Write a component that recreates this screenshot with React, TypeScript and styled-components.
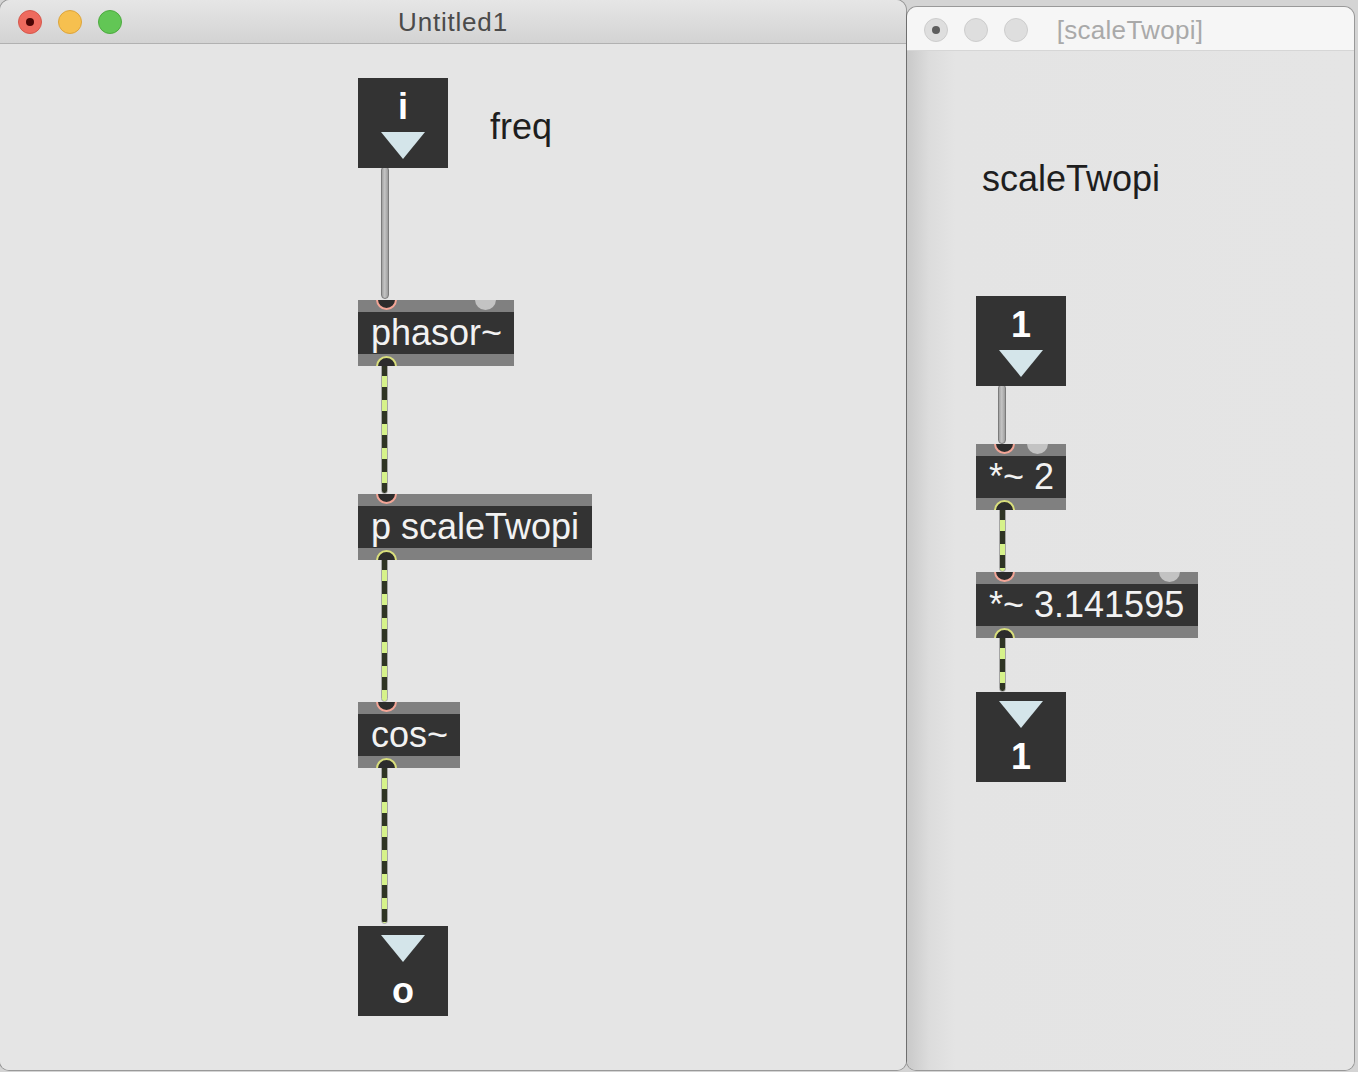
import React from "react";
import styled, { createGlobalStyle, css } from "styled-components";

const GlobalStyle = createGlobalStyle`
  html, body { margin: 0; padding: 0; }
  body {
    background: #d4d4d4;
    font-family: "Liberation Sans", Arial, sans-serif;
    overflow: hidden;
  }
`;

const Desktop = styled.div`
  display: flex;
  align-items: flex-start;
  width: 1358px;
  height: 1072px;
`;

const Window = styled.div<{ $w: number; $h: number; $top: number; $ml: number }>`
  width: ${(p) => p.$w}px;
  height: ${(p) => p.$h}px;
  margin-top: ${(p) => p.$top}px;
  margin-left: ${(p) => p.$ml}px;
  flex: none;
  display: flex;
  flex-direction: column;
  border-radius: 10px 10px 9px 9px;
  overflow: hidden;
  background: #e5e5e5;
  box-shadow: 0 0 0 1px rgba(0, 0, 0, 0.28);
`;

const TitleBar = styled.div<{ $active: boolean }>`
  height: 44px;
  flex: none;
  box-sizing: border-box;
  display: grid;
  grid-template-columns: 1fr auto 1fr;
  align-items: center;
  padding: 0 18px 0 ${(p) => (p.$active ? 18 : 17)}px;
  ${(p) =>
    p.$active
      ? css`
          background: linear-gradient(to bottom, #e6e6e6, #d3d3d3);
          border-bottom: 1px solid #b1b1b1;
        `
      : css`
          background: #f6f6f6;
          border-bottom: 1px solid #d6d6d6;
        `}
`;

const Lights = styled.div<{ $offset: number }>`
  display: flex;
  gap: 16px;
  margin-top: ${(p) => p.$offset}px;
`;

const Light = styled.span<{ $fill: string; $edge: string }>`
  width: 24px;
  height: 24px;
  box-sizing: border-box;
  border-radius: 50%;
  background: ${(p) => p.$fill};
  border: 1px solid ${(p) => p.$edge};
  display: flex;
  align-items: center;
  justify-content: center;
`;

const LightDot = styled.span<{ $color: string }>`
  width: 8px;
  height: 8px;
  border-radius: 50%;
  background: ${(p) => p.$color};
`;

const Title = styled.div<{ $active: boolean; $offset: number }>`
  font-size: 26px;
  letter-spacing: ${(p) => (p.$active ? 0.8 : 0.3)}px;
  color: ${(p) => (p.$active ? "#4b4b4b" : "#a9a9a9")};
  margin-top: ${(p) => p.$offset}px;
  white-space: nowrap;
`;

const Canvas = styled.div<{ $shade: boolean }>`
  position: relative;
  flex: 1;
  background: ${(p) =>
    p.$shade
      ? "linear-gradient(to right, #c9c9c9 0px, #dcdcdc 22px, #e4e4e4 48px, #e5e5e5 100%)"
      : "#e5e5e5"};
`;

const Node = styled.div<{ $x: number; $y: number }>`
  position: absolute;
  left: ${(p) => p.$x}px;
  top: ${(p) => p.$y}px;
`;

const ObjectBox = styled(Node)<{ $w: number }>`
  width: ${(p) => p.$w}px;
  height: 66px;
  box-sizing: border-box;
  overflow: hidden;
  background: linear-gradient(
    to bottom,
    #808080 0 12px,
    #333333 12px 54px,
    #808080 54px 66px
  );
  padding: 12px 0 0 13px;
  color: #f2f2f2;
  font-size: 36px;
  line-height: 42px;
  white-space: nowrap;
  z-index: 2;
`;

const Port = styled.span<{ $kind: "inlet" | "cold" | "outlet" }>`
  position: absolute;
  width: 21px;
  height: 21px;
  box-sizing: border-box;
  border-radius: 50%;
  ${(p) =>
    p.$kind === "inlet"
      ? css`
          left: 18px;
          top: -11px;
          background: #2c2c2c;
          border: 2.5px solid #f3a596;
        `
      : p.$kind === "cold"
      ? css`
          right: 18px;
          top: -11px;
          background: #c3c3c3;
        `
      : css`
          left: 18px;
          bottom: -11px;
          background: #2c2c2c;
          border: 2.5px solid #d9df7c;
        `}
`;

const NumberBox = styled(Node)<{ $out: boolean }>`
  width: 90px;
  height: 90px;
  box-sizing: border-box;
  background: #333333;
  display: flex;
  flex-direction: ${(p) => (p.$out ? "column-reverse" : "column")};
  justify-content: flex-end;
  align-items: center;
  gap: ${(p) => (p.$out ? 11 : 7)}px;
  padding: ${(p) => (p.$out ? "9px 0 7px" : "11px 0 9px")};
  z-index: 2;
`;

const NumberValue = styled.span`
  color: #ffffff;
  font-weight: bold;
  font-size: 36px;
  line-height: 36px;
`;

const Arrow = styled.span`
  width: 0;
  height: 0;
  border-left: 22px solid transparent;
  border-right: 22px solid transparent;
  border-top: 27px solid #d4e5ea;
`;

const Comment = styled(Node)`
  font-size: 36px;
  line-height: 42px;
  color: #1e1e1e;
  white-space: nowrap;
`;

const Cord = styled(Node)<{ $len: number; $signal: boolean }>`
  height: ${(p) => p.$len}px;
  box-sizing: border-box;
  border-radius: 4px;
  z-index: 1;
  ${(p) =>
    p.$signal
      ? css`
          width: 7px;
          border: 1px solid #a4a4a4;
          background: repeating-linear-gradient(
            to bottom,
            #2f3524 0 13px,
            #d6f28a 13px 24px
          );
        `
      : css`
          width: 8px;
          border: 1px solid #7b7b7b;
          background: linear-gradient(to right, #a2a2a2, #c4c4c4 45%, #9d9d9d);
        `}
`;

type Obj = { x: number; y: number; w: number; text: string; cold?: boolean };
type Num = { x: number; y: number; value: string; out?: boolean };
type Wire = { x: number; y: number; len: number; signal: boolean };
type Note = { x: number; y: number; text: string };

type Patch = {
  objects: Obj[];
  numbers: Num[];
  wires: Wire[];
  notes: Note[];
};

const mainPatch: Patch = {
  numbers: [
    { x: 358, y: 34, value: "i" },
    { x: 358, y: 882, value: "o", out: true },
  ],
  notes: [{ x: 490, y: 62, text: "freq" }],
  objects: [
    { x: 358, y: 256, w: 156, text: "phasor~", cold: true },
    { x: 358, y: 450, w: 234, text: "p scaleTwopi" },
    { x: 358, y: 658, w: 102, text: "cos~" },
  ],
  wires: [
    { x: 381, y: 122, len: 133, signal: false },
    { x: 381, y: 318, len: 132, signal: true },
    { x: 381, y: 512, len: 146, signal: true },
    { x: 381, y: 720, len: 160, signal: true },
  ],
};

const subPatch: Patch = {
  numbers: [
    { x: 69, y: 245, value: "1" },
    { x: 69, y: 641, value: "1", out: true },
  ],
  notes: [{ x: 75, y: 107, text: "scaleTwopi" }],
  objects: [
    { x: 69, y: 393, w: 90, text: "*~ 2", cold: true },
    { x: 69, y: 521, w: 222, text: "*~ 3.141595", cold: true },
  ],
  wires: [
    { x: 91, y: 333, len: 60, signal: false },
    { x: 92, y: 455, len: 66, signal: true },
    { x: 92, y: 583, len: 58, signal: true },
  ],
};

const PatchView: React.FC<{ patch: Patch }> = ({ patch }) => (
  <>
    {patch.wires.map((w, i) => (
      <Cord key={`w${i}`} $x={w.x} $y={w.y} $len={w.len} $signal={w.signal} />
    ))}
    {patch.notes.map((n, i) => (
      <Comment key={`n${i}`} $x={n.x} $y={n.y}>
        {n.text}
      </Comment>
    ))}
    {patch.objects.map((o, i) => (
      <ObjectBox key={`o${i}`} $x={o.x} $y={o.y} $w={o.w}>
        <Port $kind="inlet" />
        {o.cold && <Port $kind="cold" />}
        {o.text}
        <Port $kind="outlet" />
      </ObjectBox>
    ))}
    {patch.numbers.map((n, i) => (
      <NumberBox key={`b${i}`} $x={n.x} $y={n.y} $out={!!n.out}>
        <NumberValue>{n.value}</NumberValue>
        <Arrow />
      </NumberBox>
    ))}
  </>
);

export default function App() {
  return (
    <>
      <GlobalStyle />
      <Desktop>
        <Window $w={906} $h={1070} $top={0} $ml={0}>
          <TitleBar $active>
            <Lights $offset={0}>
              <Light $fill="#ee6a5e" $edge="#d5584c">
                <LightDot $color="#4a0505" />
              </Light>
              <Light $fill="#f6c04f" $edge="#dca43c" />
              <Light $fill="#62c655" $edge="#4daa3f" />
            </Lights>
            <Title $active $offset={1}>
              Untitled1
            </Title>
            <span />
          </TitleBar>
          <Canvas $shade={false}>
            <PatchView patch={mainPatch} />
          </Canvas>
        </Window>
        <Window $w={447} $h={1063} $top={7} $ml={1}>
          <TitleBar $active={false}>
            <Lights $offset={3}>
              <Light $fill="#dedede" $edge="#cdcdcd">
                <LightDot $color="#5e5e5e" />
              </Light>
              <Light $fill="#dedede" $edge="#cdcdcd" />
              <Light $fill="#dedede" $edge="#cdcdcd" />
            </Lights>
            <Title $active={false} $offset={4}>
              [scaleTwopi]
            </Title>
            <span />
          </TitleBar>
          <Canvas $shade>
            <PatchView patch={subPatch} />
          </Canvas>
        </Window>
      </Desktop>
    </>
  );
}
